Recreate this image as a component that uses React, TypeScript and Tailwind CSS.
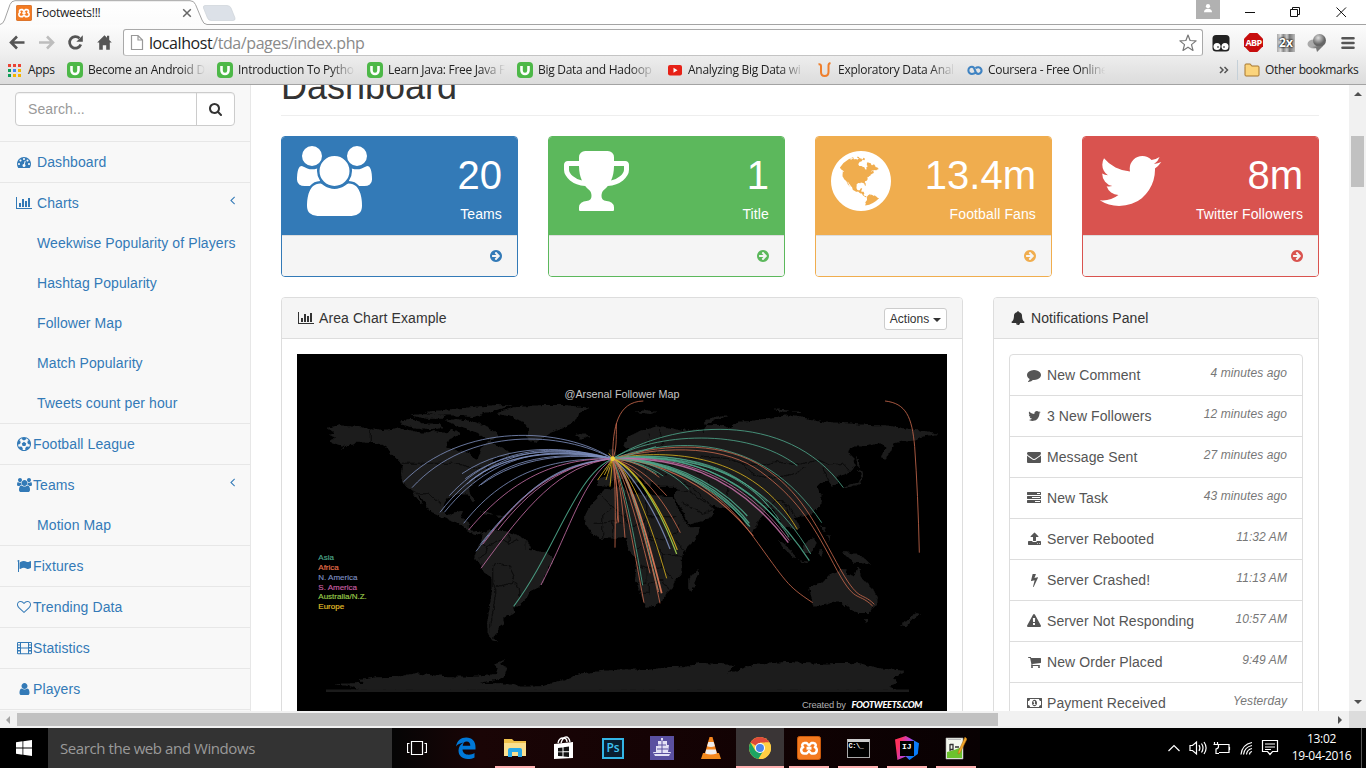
import React from 'react';

type Glyph = { x: number; w: number; d: string };

const G: Record<string, Glyph> = {
  users: { x: 0, w: 1920, d: 'M593 896q-162 5-265 128h-134q-82 0-138-40.5t-56-118.5q0-353 124-353 6 0 43.5 21t97.5 42.5 119 21.5q67 0 133-23-5 37-5 66 0 139 81 256zm1071 637q0 120-73 189.5t-194 69.5h-874q-121 0-194-69.5t-73-189.5q0-53 3.5-103.5t14-109 26.5-108.5 43-97.5 62-81 85.5-53.5 111.5-20q10 0 43 21.5t73 48 107 48 135 21.5 135-21.5 107-48 73-48 43-21.5q61 0 111.5 20t85.5 53.5 62 81 43 97.5 26.5 108.5 14 109 3.5 103.5zm-1024-1277q0 106-75 181t-181 75-181-75-75-181 75-181 181-75 181 75 75 181zm704 384q0 159-112.5 271.5t-271.5 112.5-271.5-112.5-112.5-271.5 112.5-271.5 271.5-112.5 271.5 112.5 112.5 271.5zm576 225q0 78-56 118.5t-138 40.5h-134q-103-123-265-128 81-117 81-256 0-29-5-66 66 23 133 23 59 0 119-21.5t97.5-42.5 43.5-21q124 0 124 353zm-128-609q0 106-75 181t-181 75-181-75-75-181 75-181 181-75 181 75 75 181z' },
  trophy: { x: 64, w: 1664, d: 'M522 883q-74-162-74-371h-256v96q0 78 94.5 162t235.5 113zm1078-275v-96h-256q0 209-74 371 141-29 235.5-113t94.5-162zm128-128v128q0 71-41.5 143t-112 130-173 97.5-215.5 44.5q-42 54-95 95-38 34-52.5 72.5t-14.5 89.5q0 54 30.5 91t97.5 37q75 0 133.5 45.5t58.5 114.5v64q0 14-9 23t-23 9h-832q-14 0-23-9t-9-23v-64q0-69 58.5-114.5t133.5-45.5q67 0 97.5-37t30.5-91q0-51-14.5-89.5t-52.5-72.5q-53-41-95-95-113-5-215.5-44.5t-173-97.5-112-130-41.5-143v-128q0-40 28-68t68-28h288v-96q0-66 47-113t113-47h576q66 0 113 47t47 113v96h288q40 0 68 28t28 68z' },
  globe: { x: 128, w: 1536, d: 'M896 128q209 0 385.5 103t279.5 279.5 103 385.5-103 385.5-279.5 279.5-385.5 103-385.5-103-279.5-279.5-103-385.5 103-385.5 279.5-279.5 385.5-103zm274 521q-2 1-9.5 9.5t-13.5 9.5q2 0 4.5-5t5-11 3.5-7q6-7 22-15 14-6 52-12 34-8 51 11-2-2 9.5-13t14.5-12q3-2 15-4.5t15-7.5l2-22q-12 1-17.5-7t-6.5-21q0 2-6 8 0-7-4.5-8t-11.5 1-9 1q-10-3-15-7.5t-8-16.5-4-15q-2-5-9.5-11t-9.5-10q-1-2-2.5-5.5t-3-6.5-4-5.5-5.5-2.5-7 5-7.5 10-4.5 5q-3-2-6-1.5t-4.5 1-4.5 3-5 3.5q-3 2-8.5 3t-8.5 2q15-5-1-11-10-4-16-3 9-4 7.5-12t-8.5-14h5q-1-4-8.5-8.5t-17.5-8.5-13-6q-8-5-34-9.5t-33-.5q-5 6-4.5 10.5t4 14 3.5 12.5q1 6-5.5 13t-6.5 12q0 7 14 15.5t10 21.5q-3 8-16 16t-16 12q-5 8-1.5 18.5t10.5 16.5q2 2 1.5 4t-3.5 4.5-5.5 4-6.5 3.5l-3 2q-11 5-20.5-6t-13.5-26q-7-25-16-30-23-8-29 1-5-13-41-26-25-9-58-4 6-1 0-15-7-15-19-12 3-6 4-17.5t1-13.5q3-13 12-23 1-1 7-8.5t9.5-13.5.5-6q35 4 50-11 5-5 11.5-17t10.5-17q9-6 14-5.5t14.5 5.5 14.5 5q14 1 15.5-11t-7.5-20q12 1 3-17-4-7-8-9-12-4-27 5-8 4 2 8-1-1-9.5 10.5t-16.5 17.5-16-5q-1-1-5.5-13.5t-9.5-13.5q-8 0-16 15 3-8-11-15t-24-8q19-12-8-27-7-4-20.5-5t-19.5 4q-5 7-5.5 11.5t5 8 10.5 5.5 11.5 4 8.5 3q14 10 8 14-2 1-8.5 3.5t-11.5 4.5-6 4q-3 4 0 14t-2 14q-5-5-9-17.5t-7-16.5q7 9-25 6l-10-1q-4 0-16 2t-20.5 1-13.5-8q-4-8 0-20 1-4 4-2-4-3-11-9.5t-10-8.5q-46 15-94 41 6 1 12-1 5-2 13-6.5t10-5.5q34-14 42-7l5-5q14 16 20 25-7-4-30-1-20 6-22 12 7 12 5 18-4-3-11.5-10t-14.5-11-15-5q-16 0-22 1-146 80-235 222 7 7 12 8 4 1 5 9t2.5 11 11.5-3q9 8 3 19 1-1 44 27 19 17 21 21 3 11-10 18-1-2-9-9t-9-4q-3 5 .5 18.5t10.5 12.5q-7 0-9.5 16t-2.5 35.5-1 23.5l2 1q-3 12 5.5 34.5t21.5 19.5q-13 3 20 43 6 8 8 9 3 2 12 7.5t15 10 10 10.5q4 5 10 22.5t14 23.5q-2 6 9.5 20t10.5 23q-1 0-2.5 1t-2.5 1q3 7 15.5 14t15.5 13q1 3 2 10t3 11 8 2q2-20-24-62-15-25-17-29-3-5-5.5-15.5t-4.5-14.5q2 0 6 1.5t8.5 3.5 7.5 4 2 3q-3 7 2 17.5t12 18.5 17 19 12 13q6 6 14 19.5t0 13.5q9 0 20 10.5t17 19.5q5 8 8 26t5 24q2 7 8.5 13.5t12.5 9.5l16 8 13 7q5 2 18.5 10.5t21.5 11.5q10 4 16 4t14.5-2.5 13.5-3.5q15-2 29 15t21 21q36 19 55 11-2 1 .5 7.5t8 15.5 9 14.5 5.5 8.5q5 6 18 15t18 15q6-4 7-9-3 8 7 20t18 10q14-3 14-32-31 15-49-18 0-1-2.5-5.5t-4-8.5-2.5-8.5 0-7.5 5-3q9 0 10-3.5t-2-12.5-4-13q-1-8-11-20t-12-15q-5 9-16 8t-16-9q0 1-1.5 5.5t-1.5 6.5q-13 0-15-1 1-3 2.5-17.5t3.5-22.5q1-4 5.5-12t7.5-14.5 4-12.5-4.5-9.5-17.5-2.5q-19 1-26 20-1 3-3 10.5t-5 11.5-9 7q-7 3-24 2t-24-5q-13-8-22.5-29t-9.5-37q0-10 2.5-26.5t3-25-5.5-24.5q3-2 9-9.5t10-10.5q2-1 4.5-1.5t4.5 0 4-1.5 3-6q-1-1-4-3-3-3-4-3 7 3 28.5-1.5t27.5 1.5q15 11 22-2 0-1-2.5-9.5t-.5-13.5q5 27 29 9 3 3 15.5 5t17.5 5q3 2 7 5.5t5.5 4.5 5-.5 8.5-6.5q10 14 12 24 11 40 19 44 7 3 11 2t4.5-9.5 0-14-1.5-12.5l-1-8v-18l-1-8q-15-3-18.5-12t1.5-18.5 15-18.5q1-1 8-3.5t15.5-6.5 12.5-8q21-19 15-35 7 0 11-9-1 0-5-3t-7.5-5-4.5-2q9-5 2-16 5-3 7.5-11t7.5-10q9 12 21 2 8-8 1-16 5-7 20.5-10.5t18.5-9.5q7 2 8-2t1-12 3-12q4-5 15-9t13-5l17-11q3-4 0-4 18 2 31-11 10-11-6-20 3-6-3-9.5t-15-5.5q3-1 11.5-.5t10.5-1.5q15-10-7-16-17-5-43 12zm-163 877q206-36 351-189-3-3-12.5-4.5t-12.5-3.5q-18-7-24-8 1-7-2.5-13t-8-9-12.5-8-11-7q-2-2-7-6t-7-5.5-7.5-4.5-8.5-2-10 1l-3 1q-3 1-5.5 2.5t-5.5 3-4 3 0 2.5q-21-17-36-22-5-1-11-5.5t-10.5-7-10-1.5-11.5 7q-5 5-6 15t-2 13q-7-5 0-17.5t2-18.5q-3-6-10.5-4.5t-12 4.5-11.5 8.5-9 6.5-8.5 5.5-8.5 7.5q-3 4-6 12t-5 11q-2-4-11.5-6.5t-9.5-5.5q2 10 4 35t5 38q7 31-12 48-27 25-29 40-4 22 12 26 0 7-8 20.5t-7 21.5q0 6 2 16z' },
  twitter: { x: 64, w: 1664, d: 'M1684 408q-67 98-162 167 1 14 1 42 0 130-38 259.5t-115.5 248.5-184.5 210.5-258 146-323 54.5q-271 0-496-145 35 4 78 4 225 0 401-138-105-2-188-64.5t-114-159.5q33 5 61 5 43 0 85-11-112-23-185.5-111.5t-73.5-205.5v-4q68 38 146 41-66-44-105-115t-39-154q0-88 44-163 121 149 294.5 238.5t371.5 99.5q-8-38-8-74 0-134 94.5-228.5t228.5-94.5q140 0 236 102 109-21 205-78-37 115-142 178 93-10 186-50z' },
  arrow: { x: 128, w: 1536, d: 'M1413 896q0-27-18-45l-91-91-362-362q-18-18-45-18t-45 18l-91 91q-18 18-18 45t18 45l189 189h-502q-26 0-45 19t-19 45v128q0 26 19 45t45 19h502l-189 189q-18 18-18 45t18 45l91 91q18 18 45 18t45-18l362-362 91-91q18-18 18-45zm251 0q0 209-103 385.5t-279.5 279.5-385.5 103-385.5-103-279.5-279.5-103-385.5 103-385.5 279.5-279.5 385.5-103 385.5 103 279.5 279.5 103 385.5z' },
  search: { x: 64, w: 1664, d: 'M1216 832q0-185-131.5-316.5t-316.5-131.5-316.5 131.5-131.5 316.5 131.5 316.5 316.5 131.5 316.5-131.5 131.5-316.5zm512 832q0 52-38 90t-90 38q-54 0-90-38l-343-342q-179 124-399 124-143 0-273.5-55.5t-225-150-150-225-55.5-273.5 55.5-273.5 150-225 225-150 273.5-55.5 273.5 55.5 225 150 150 225 55.5 273.5q0 220-124 399l343 343q37 37 37 90z' },
  chart: { x: 0, w: 2048, d: 'M640 896v512h-256v-512h256zm384-512v1024h-256v-1024h256zm1024 1152v128h-2048v-1536h128v1408h1920zm-640-896v768h-256v-768h256zm384-384v1152h-256v-1152h256z' },
  tacho: { x: 0, w: 1792, d: 'M384 1152q0-53-37.5-90.5t-90.5-37.5-90.5 37.5-37.5 90.5 37.5 90.5 90.5 37.5 90.5-37.5 37.5-90.5zm192-448q0-53-37.5-90.5t-90.5-37.5-90.5 37.5-37.5 90.5 37.5 90.5 90.5 37.5 90.5-37.5 37.5-90.5zm428 481l101-382q6-26-7.5-48.5t-38.5-29.5-48 6.5-30 39.5l-101 382q-60 5-107 43.5t-63 98.5q-20 77 20 146t117 89 146-20 89-117q16-60-6-117t-72-91zm660-33q0-53-37.5-90.5t-90.5-37.5-90.5 37.5-37.5 90.5 37.5 90.5 90.5 37.5 90.5-37.5 37.5-90.5zm-640-640q0-53-37.5-90.5t-90.5-37.5-90.5 37.5-37.5 90.5 37.5 90.5 90.5 37.5 90.5-37.5 37.5-90.5zm448 192q0-53-37.5-90.5t-90.5-37.5-90.5 37.5-37.5 90.5 37.5 90.5 90.5 37.5 90.5-37.5 37.5-90.5zm320 448q0 261-141 483-19 29-54 29h-1402q-35 0-54-29-141-221-141-483 0-182 71-348t191-286 286-191 348-71 348 71 286 191 191 286 71 348z' },
  futbol: { x: 0, w: 1792, d: 'M609 816l287-208 287 208-109 336h-355zm287-816q182 0 348 71t286 191 191 286 71 348-71 348-191 286-286 191-348 71-348-71-286-191-191-286-71-348 71-348 191-286 286-191 348-71zm619 1350q149-203 149-454v-3l-102 89-240-224 63-323 134 12q-150-206-389-282l53 124-287 159-287-159 53-124q-239 76-389 282l135-12 62 323-240 224-102-89v3q0 251 149 454l30-132 326 40 139 298-116 69q117 39 240 39t240-39l-116-69 139-298 326-40z' },
  flag: { x: 0, w: 1792, d: 'M320 256q0 72-64 110v1266q0 13-9.5 22.5t-22.5 9.5h-64q-13 0-22.5-9.5t-9.5-22.5v-1266q-64-38-64-110 0-53 37.5-90.5t90.5-37.5 90.5 37.5 37.5 90.5zm1472 64v763q0 25-12.5 38.5t-39.5 27.5q-215 116-369 116-61 0-123.5-22t-108.5-48-115.5-48-142.5-22q-192 0-464 146-17 9-33 9-26 0-45-19t-19-45v-742q0-32 31-55 21-14 79-43 236-120 421-120 107 0 200 29t219 88q38 19 88 19 54 0 117.5-21t110-47 88-47 54.5-21q26 0 45 19t19 45z' },
  heart: { x: 0, w: 1792, d: 'M1664 596q0-81-21.5-143t-55-98.5-81.5-59.5-94-31-98-8-112 25.5-110.5 64-86.5 72-60 61.5q-18 22-49 22t-49-22q-24-28-60-61.5t-86.5-72-110.5-64-112-25.5-98 8-94 31-81.5 59.5-55 98.5-21.5 143q0 168 187 355l581 560 580-559q188-188 188-356zm128 0q0 221-229 450l-623 600q-18 18-44 18t-44-18l-624-602q-10-8-27.5-26t-55.5-65.5-68-97.5-53.5-121-23.5-138q0-220 127-344t351-124q62 0 126.5 21.5t120 58 95.5 68.5 76 68q36-36 76-68t95.5-68.5 120-58 126.5-21.5q224 0 351 124t127 344z' },
  film: { x: 0, w: 1920, d: 'M160 128h1600q160 0 160 160v1248q0 160-160 160h-1600q-160 0-160-160v-1248q0-160 160-160zM128 256v192h256v-192zM128 576v192h256v-192zM128 960v192h256v-192zM128 1344v224h256v-224zM512 256v576h896v-576zM512 960v608h896v-608zM1536 256v192h256v-192zM1536 576v192h256v-192zM1536 960v192h256v-192zM1536 1344v224h256v-224z' },
  user: { x: 192, w: 1408, d: 'M1536 1399q0 109-62.5 187t-150.5 78h-854q-88 0-150.5-78t-62.5-187q0-85 8.5-160.5t31.5-152 58.5-131 94-89 134.5-34.5q131 128 313 128t313-128q76 0 134.5 34.5t94 89 58.5 131 31.5 152 8.5 160.5zm-256-887q0 159-112.5 271.5t-271.5 112.5-271.5-112.5-112.5-271.5 112.5-271.5 271.5-112.5 271.5 112.5 112.5 271.5z' },
  angle: { x: 576, w: 640, d: 'M1203 544q0 13-10 23l-393 393 393 393q10 10 10 23t-10 23l-50 50q-10 10-23 10t-23-10l-466-466q-10-10-10-23t10-23l466-466q10-10 23-10t23 10l50 50q10 10 10 23z' },
  bell: { x: 0, w: 1792, d: 'M912 1696q0-16-16-16-59 0-101.5-42.5t-42.5-101.5q0-16-16-16t-16 16q0 73 51.5 124.5t124.5 51.5q16 0 16-16zm816-288q0 52-38 90t-90 38h-448q0 106-75 181t-181 75-181-75-75-181h-448q-52 0-90-38t-38-90q50-42 91-88t85-119.5 74.5-158.5 50-206 19.5-260q0-152 117-282.5t307-158.5q-8-19-8-39 0-40 28-68t68-28 68 28 28 68q0 20-8 39 190 28 307 158.5t117 282.5q0 139 19.5 260t50 206 74.5 158.5 85 119.5 91 88z' },
  comment: { x: 0, w: 1792, d: 'M1792 896q0 174-120 321.5t-326 233-450 85.5q-70 0-145-8-198 175-460 242-49 14-114 22-17 2-30.5-9t-17.5-29v-1q-3-4-.5-12t2-10 4.5-9.5l6-9 7-8.5 8-9q7-8 31-34.5t34.5-38 31-39.5 32.5-51 27-59 26-76q-157-89-247.5-220t-90.5-281q0-130 71-248.5t191-204.5 286-136.5 348-50.5q244 0 450 85.5t326 233 120 321.5z' },
  envelope: { x: 0, w: 1792, d: 'M1792 710v794q0 66-47 113t-113 47h-1472q-66 0-113-47t-47-113v-794q44 49 101 87 362 246 497 345 57 42 92.5 65.5t94.5 48 110 24.5h2q51 0 110-24.5t94.5-48 92.5-65.5q170-123 498-345 57-39 100-87zm0-294q0 79-49 151t-122 123q-376 261-468 325-10 7-42.5 31t-54 38.5-52 32.5-57.5 27-50 9h-2q-23 0-50-9t-57.5-27-52-32.5-54-38.5-42.5-31q-91-64-262-182.5t-205-142.5q-62-42-117-115.5t-55-136.5q0-78 41.5-130t118.5-52h1472q65 0 112.5 47t47.5 113z' },
  tasks: { x: 0, w: 1792, d: 'M1024 1408h640v-128h-640v128zm-384-512h1024v-128h-1024v128zm640-512h384v-128h-384v128zm512 832v256q0 26-19 45t-45 19h-1664q-26 0-45-19t-19-45v-256q0-26 19-45t45-19h1664q26 0 45 19t19 45zm0-512v256q0 26-19 45t-45 19h-1664q-26 0-45-19t-19-45v-256q0-26 19-45t45-19h1664q26 0 45 19t19 45zm0-512v256q0 26-19 45t-45 19h-1664q-26 0-45-19t-19-45v-256q0-26 19-45t45-19h1664q26 0 45 19t19 45z' },
  upload: { x: 64, w: 1664, d: 'M1344 1472q0-26-19-45t-45-19-45 19-19 45 19 45 45 19 45-19 19-45zm256 0q0-26-19-45t-45-19-45 19-19 45 19 45 45 19 45-19 19-45zm128-224v320q0 40-28 68t-68 28h-1472q-40 0-68-28t-28-68v-320q0-40 28-68t68-28h427q21 56 70.5 92t110.5 36h256q61 0 110.5-36t70.5-92h427q40 0 68 28t28 68zm-325-648q-17 40-59 40h-256v448q0 26-19 45t-45 19h-256q-26 0-45-19t-19-45v-448h-256q-42 0-59-40-17-39 14-69l448-448q18-19 45-19t45 19l448 448q31 30 14 69z' },
  bolt: { x: 448, w: 896, d: 'M1333 566q18 20 7 44l-540 1157q-13 25-42 25-4 0-14-2-17-5-25.5-19t-4.5-30l197-808-406 101q-4 1-12 1-18 0-31-11-18-15-13-39l201-825q4-14 16-23t28-9h328q19 0 32 12.5t13 29.5q0 8-5 18l-171 463 396-98q8-2 12-2 19 0 34 15z' },
  warning: { x: 0, w: 1792, d: 'M1024 1375v-190q0-14-9.5-23.5t-22.5-9.5h-192q-13 0-22.5 9.5t-9.5 23.5v190q0 14 9.5 23.5t22.5 9.5h192q13 0 22.5-9.5t9.5-23.5zm-2-374l18-459q0-12-10-19-13-11-24-11h-220q-11 0-24 11-10 7-10 21l17 457q0 10 10 16.5t24 6.5h185q14 0 23.5-6.5t10.5-16.5zm-14-934l768 1408q35 63-2 126-17 29-46.5 46t-63.5 17h-1536q-34 0-63.5-17t-46.5-46q-37-63-2-126l768-1408q17-31 47-49t65-18 65 18 47 49z' },
  cart: { x: 64, w: 1664, d: 'M704 1536q0 52-38 90t-90 38-90-38-38-90 38-90 90-38 90 38 38 90zm896 0q0 52-38 90t-90 38-90-38-38-90 38-90 90-38 90 38 38 90zm128-1088v512q0 24-16.5 42.5t-40.5 21.5l-1044 122q13 60 13 70 0 16-24 64h920q26 0 45 19t19 45-19 45-45 19h-1024q-26 0-45-19t-19-45q0-11 8-31.5t16-36 21.5-40 15.5-29.5l-177-823h-204q-26 0-45-19t-19-45 19-45 45-19h256q16 0 28.5 6.5t19.5 15.5 13 24.5 8 26 5.5 29.5 4.5 26h1201q26 0 45 19t19 45z' },
  money: { x: 0, w: 1920, d: 'M64 256h1792q64 0 64 64v1152q0 64-64 64h-1792q-64 0-64-64v-1152q0-64 64-64zM384 384q0 106-75 181t-181 75v512q106 0 181 75t75 181h1152q0-106 75-181t181-75v-512q-106 0-181-75t-75-181zM960 480q130 0 225 130t95 286-95 286-225 130-225-130-95-286 95-286 225-130zM890 640l-130 120 70 85 70-55v250h-110v110h340v-110h-110v-400z' },
};

function Fa({ name, size = 14, className = '' }: { name: string; size?: number; className?: string }) {
  const g = G[name];
  return (
    <svg viewBox={`${g.x} 0 ${g.w} 1792`} width={(g.w / 1792) * size} height={size} fill="currentColor" fillRule={name === 'film' || name === 'money' ? 'evenodd' : 'nonzero'} className={`block shrink-0 ${className}`}>
      <path d={g.d} />
    </svg>
  );
}

function Fw({ name }: { name: string }) {
  return (
    <span className="flex w-[18px] shrink-0 justify-center">
      <Fa name={name} />
    </span>
  );
}

function Xampp({ size }: { size: number }) {
  return (
    <svg width={size} height={size} viewBox="0 0 24 24" className="block shrink-0">
      <rect x="0.5" y="0.5" width="23" height="23" rx="2" fill="#f47a20" stroke="#c9590c" />
      <path d="M7.500 7h2.200l2.300 2.500 2.300-2.500h2.200a2.300 2.300 0 0 1 1.300 4.200 3.300 3.300 0 0 1-1 6.300h-2.500l-2.300-2.500-2.300 2.500H7.200a3.300 3.300 0 0 1-1-6.300A2.300 2.300 0 0 1 7.500 7z" fill="none" stroke="#fff" strokeWidth="2.500" strokeLinejoin="round" />
      <path d="M9.500 12.200h5" stroke="#fff" strokeWidth="3" />
    </svg>
  );
}

/* ---------- Browser chrome ---------- */

function TabStrip() {
  return (
    <div className="flex h-[25px] shrink-0 bg-white">
      <div className="relative h-[25px] w-[240px] shrink-0">
        <svg width="240" height="25" viewBox="0 0 240 25" className="absolute inset-0">
          <defs>
            <linearGradient id="tab" x1="0" y1="0" x2="0" y2="1">
              <stop offset="0" stopColor="#fff" />
              <stop offset="1" stopColor="#fbfbfb" />
            </linearGradient>
          </defs>
          <path d="M0 24.500Q3 24 4.500 20L10 4.500Q11.500 0.800 15 0.700H190Q194 0.700 195.500 4.500L202 20Q203.500 24.300 207 24.500V25H0z" fill="url(#tab)" />
          <path d="M0 24.500Q3 24 4.500 20L10 4.500Q11.500 0.800 15 0.700H190Q194 0.700 195.500 4.500L202 20Q203.500 24.300 207 24.500H240" fill="none" stroke="#a3a3a3" />
          <path d="M205 5.500H227Q230 5.500 231 8L235 18Q235.500 20.500 233 20.500H211Q208.500 20.500 207.500 18L203.500 8Q203 5.500 205 5.500z" fill="#dce1e8" stroke="#cdd2d9" strokeWidth=".7" />
        </svg>
        <div className="relative flex h-[25px] items-center pl-4">
          <Xampp size={16} />
          <span className="ml-1 w-[146px] text-[12px] tracking-[-0.22px] text-[#222]">Footweets!!!</span>
          <svg width="10" height="10" viewBox="0 0 10 10" stroke="#666" strokeWidth="1.500"><path d="M1.200 1.200l7.600 7.600M8.800 1.200L1.200 8.800" /></svg>
        </div>
      </div>
      <div className="flex grow border-b border-[#a3a3a3]">
        <div className="ml-auto mr-[24px] flex h-[19px] w-6 justify-center bg-[#b1b1b1] pt-1">
          <svg width="10" height="9" viewBox="0 0 10 9" fill="#fff"><circle cx="5" cy="2.200" r="2.100" /><path d="M1 8.200Q1 4.700 5 4.700t4 3.500z" /></svg>
        </div>
        <svg width="122" height="24" viewBox="1244 0 122 24" fill="none" stroke="#111" strokeWidth="1">
          <path d="M1245 12.500h10M1290.500 9.500h7v7h-7zM1292.500 9.500v-2h7v7h-2M1336.500 7.500l9.500 9.500M1346 7.500l-9.500 9.500" />
        </svg>
      </div>
    </div>
  );
}

function Toolbar() {
  return (
    <div className="flex h-[35px] shrink-0 pt-1">
      <svg width="123" height="31" viewBox="0 29 123 31" fill="none" className="shrink-0">
        <path d="M24.500 42.500H12M17 36.500l-6 6 6 6" stroke="#555" strokeWidth="2.600" />
        <path d="M39 42.500h12.500M47 36.500l6 6-6 6" stroke="#bdbdbd" strokeWidth="2.600" />
        <path d="M79.500 38.300A5.800 5.800 0 1 0 80.800 44.500" stroke="#555" strokeWidth="2.700" />
        <path d="M82.800 35.200v6.500h-6.500z" fill="#555" />
        <path d="M104.500 35.200l-7.300 7.300h2v7.300h3.600v-4.600h3.400v4.600h3.600v-7.300h2l-2.600-2.600v-4.200h-2.200v2z" fill="#555" />
      </svg>
      <div className="flex h-[27px] w-[1080px] shrink-0 items-center rounded-[3px] border border-[#a9a9a9] border-b-[#c4c4c4] bg-white pl-[6px] pr-[5px]">
        <svg width="14" height="17" viewBox="0 0 14 17" fill="#fff" stroke="#999" strokeWidth="1.200"><path d="M1.500 1.500h6.500l4.500 4.500v9.500h-11zM8 1.500v4.500h4.500" /></svg>
        <span className="ml-[5px] text-[16px] leading-[24px] tracking-[-0.42px] text-[#8a8a8a]"><span className="text-[#222]">localhost</span>/tda/pages/index.php</span>
        <svg className="ml-auto" width="18" height="18" viewBox="0 0 18 18" fill="#fff" stroke="#777" strokeWidth="1.200" strokeLinejoin="round"><path d="M9 1l2.100 5.500 6 .4-4.600 3.700 1.500 5.800L9 13.200l-5 3.200 1.500-5.800L.9 6.900l6-.4z" /></svg>
      </div>
      <div className="ml-[9px] flex h-[27px] items-center gap-[14px]">
        <svg width="18" height="18" viewBox="0 0 18 18"><rect x=".5" y="1" width="17" height="16.500" rx="3.500" fill="#222" /><circle cx="5" cy="12.500" r="3.500" fill="#fff" /><circle cx="13" cy="12.500" r="3.500" fill="#fff" /><circle cx="6" cy="13" r=".8" /><circle cx="12" cy="13" r=".8" /></svg>
        <span className="flex h-[19px] w-[19px] items-center justify-center bg-[#c70d0d] text-[9px] font-bold tracking-[-0.7px] text-white [clip-path:polygon(30%_0,70%_0,100%_30%,100%_70%,70%_100%,30%_100%,0_70%,0_30%)]">ABP</span>
        <span className="flex h-[18px] w-[18px] items-center justify-center bg-[linear-gradient(90deg,#aaa,#ddd_20%,#888_35%,#ccc_55%,#777_70%,#bbb)] text-[12px] font-bold text-white [text-shadow:0_0_2px_#000,0_0_2px_#000]">2x</span>
        <svg width="20" height="20" viewBox="0 0 20 20" className="-ml-[2px]"><defs><radialGradient id="orb" cx=".4" cy=".3"><stop offset="0" stopColor="#ddd" /><stop offset="1" stopColor="#666" /></radialGradient></defs><ellipse cx="7" cy="11" rx="6.500" ry="4.500" fill="#aaa" /><circle cx="12.500" cy="7.500" r="6.500" fill="url(#orb)" /><path d="M5 14q5-1 11-1l-6 6-1-4z" fill="#777" /></svg>
        <svg width="14" height="14" viewBox="0 0 14 14" stroke="#555" strokeWidth="2.600" strokeLinecap="round"><path d="M1.500 2.200h11M1.500 7h11M1.500 11.800h11" /></svg>
      </div>
    </div>
  );
}

function Udemy() {
  return (
    <span className="flex h-4 w-4 shrink-0 items-center justify-center rounded-[4px] bg-[#4db848]">
      <svg width="10" height="11" viewBox="0 0 10 11" fill="none" stroke="#fff" strokeWidth="2.600"><path d="M1.500 1v4.500a3.500 3.500 0 0 0 7 0V1" /></svg>
    </span>
  );
}

const ytIcon = <svg width="16" height="16" viewBox="0 0 16 16" className="shrink-0"><rect x="1" y="3" width="14" height="10.500" rx="2" fill="#e62117" /><path d="M6.500 5.800v5l4-2.500z" fill="#fff" /></svg>;
const orangeU = <svg width="16" height="16" viewBox="0 0 16 16" fill="none" className="shrink-0"><path d="M1.500 2.300Q4 2 4 4v6q0 4 3.700 4 3.800 0 3.800-4V3.500q0-2 2-2.500" stroke="#ef7f2d" strokeWidth="2" /></svg>;
const courseraIcon = <svg width="16" height="16" viewBox="0 0 16 16" fill="none" className="shrink-0"><path d="M9 10.300Q7 12 5 12a3.600 3.600 0 1 1 0-7.200Q7 4.800 8 8.400T11.200 12a3.400 3.400 0 1 0-2.600-5.700" stroke="#3f83c2" strokeWidth="2.100" /></svg>;

function BookmarksBar() {
  const items: [React.ReactNode, string][] = [
    [<Udemy />, 'Become an Android D'],
    [<Udemy />, 'Introduction To Pytho'],
    [<Udemy />, 'Learn Java: Free Java F'],
    [<Udemy />, 'Big Data and Hadoop'],
    [ytIcon, 'Analyzing Big Data wi'],
    [orangeU, 'Exploratory Data Anal'],
    [courseraIcon, 'Coursera - Free Online'],
  ];
  const dots = ['#ea4335', '#ea4335', '#ea4335', '#0f9d58', '#4285f4', '#f4b400', '#0f9d58', '#f4b400', '#f4b400'];
  return (
    <div className="flex h-[24px] shrink-0 items-center pb-[4px] pl-2 text-[12px] text-[#222]">
      <span className="grid w-[13px] grid-cols-3 gap-[2px]">
        {dots.map((c, i) => <span key={i} className="h-[3px] w-[3px]" style={{ background: c }} />)}
      </span>
      <span className="ml-[7px] w-[39px] tracking-[-0.3px]">Apps</span>
      {items.map(([icon, label], i) => (
        <span key={i} className="flex w-[150px] shrink-0 items-center gap-[5px]">
          {icon}
          <span className="w-[121px] whitespace-nowrap tracking-[-0.28px] [mask-image:linear-gradient(90deg,#000_76%,transparent_97%)]">{label}</span>
        </span>
      ))}
      <svg width="10" height="8" viewBox="0 0 10 8" className="ml-[102px] mr-[8px]" fill="none" stroke="#555" strokeWidth="1.500"><path d="M1 1l3 3-3 3M5.500 1l3 3-3 3" /></svg>
      <span className="mr-[6px] h-5 w-px bg-[#c5d0d8]" />
      <svg width="16" height="14" viewBox="0 0 16 14"><path d="M1 3.500V12q0 1 1 1h12q1 0 1-1V4q0-1-1-1H7.500L6.500 1H2Q1 1 1 2z" fill="#fbd47c" stroke="#a5742c" /></svg>
      <span className="ml-[5px] whitespace-nowrap tracking-[-0.35px]">Other bookmarks</span>
    </div>
  );
}

/* ---------- Sidebar ---------- */

type Nav = { icon: string; label: string; gap?: boolean; arrow?: boolean; children?: string[] };
const nav: Nav[] = [
  { icon: 'tacho', label: 'Dashboard', gap: true },
  { icon: 'chart', label: 'Charts', gap: true, arrow: true, children: ['Weekwise Popularity of Players', 'Hashtag Popularity', 'Follower Map', 'Match Popularity', 'Tweets count per hour'] },
  { icon: 'futbol', label: 'Football League' },
  { icon: 'users', label: 'Teams', arrow: true, children: ['Motion Map'] },
  { icon: 'flag', label: 'Fixtures' },
  { icon: 'heart', label: 'Trending Data' },
  { icon: 'film', label: 'Statistics' },
  { icon: 'user', label: 'Players' },
];

function Sidebar() {
  return (
    <aside className="w-[251px] shrink-0 border-r border-[#e7e7e7] bg-[#f8f8f8] tracking-[0.09px] text-[#337ab7]">
      <div className="border-b border-[#e7e7e7] px-[15px] pb-[15px] pt-[7px]">
        <div className="flex h-[34px] rounded-[4px] border border-[#ccc] bg-white shadow-[inset_0_1px_1px_rgba(0,0,0,0.06)]">
          <span className="grow border-r border-[#ccc] pl-3 leading-[32px] text-[#999]">Search...</span>
          <span className="flex w-[37px] items-center justify-center text-[#333]"><Fa name="search" /></span>
        </div>
      </div>
      <ul>
        {nav.map((n) => (
          <li key={n.label} className="border-b border-[#e7e7e7]">
            <div className="flex h-10 items-center px-[15px]">
              <Fw name={n.icon} />
              <span className={n.gap ? 'ml-1' : ''}>{n.label}</span>
              {n.arrow && <Fa name="angle" className="mb-[6px] ml-auto" />}
            </div>
            {n.children?.map((c) => (
              <div key={c} className="h-10 whitespace-nowrap pl-[37px] leading-10">{c}</div>
            ))}
          </li>
        ))}
      </ul>
    </aside>
  );
}

/* ---------- Stat cards ---------- */

const cards = [
  { icon: 'users', value: '20', label: 'Teams', box: 'border-[#337ab7]', head: 'bg-[#337ab7]', ink: 'text-[#337ab7]' },
  { icon: 'trophy', value: '1', label: 'Title', box: 'border-[#5cb85c]', head: 'bg-[#5cb85c]', ink: 'text-[#5cb85c]' },
  { icon: 'globe', value: '13.4m', label: 'Football Fans', box: 'border-[#f0ad4e]', head: 'bg-[#f0ad4e]', ink: 'text-[#f0ad4e]' },
  { icon: 'twitter', value: '8m', label: 'Twitter Followers', box: 'border-[#d9534f]', head: 'bg-[#d9534f]', ink: 'text-[#d9534f]' },
];

function Cards() {
  return (
    <div className="grid grid-cols-4 gap-[30px]">
      {cards.map((c) => (
        <div key={c.label} className={`h-[141px] overflow-hidden rounded-[4px] border ${c.box}`}>
          <div className={`flex h-[98px] items-start justify-between px-[15px] pt-[9px] text-white ${c.head}`}>
            <Fa name={c.icon} size={70} />
            <div className="pt-px text-right">
              <div className="text-[40px] leading-[57px]">{c.value}</div>
              <div className="leading-5 tracking-[0.12px]">{c.label}</div>
            </div>
          </div>
          <div className={`flex h-[41px] items-center justify-end border-t border-[#ddd] bg-[#f5f5f5] px-[15px] ${c.ink}`}>
            <Fa name="arrow" />
          </div>
        </div>
      ))}
    </div>
  );
}

/* ---------- Follower map ---------- */

const land = [
  'M92 233L130 226 185 231 223 234 260 240 300 235 340 240 380 248 420 243 450 250 470 236 492 250 475 262 458 272 450 292 480 300 520 305 530 322 542 330 550 306 555 290 582 272 600 288 622 293 642 312 622 322 598 322 588 335 610 345 572 352 560 375 542 385 534 400 520 412 527 435 537 452 530 457 515 434 490 432 470 437 455 445 445 460 440 485 455 495 470 490 490 482 502 484 490 502 507 508 520 515 518 535 530 545 545 542 560 550 540 556 520 548 505 530 480 517 455 507 430 500 402 482 385 455 365 432 380 462 372 458 350 425 330 410 318 395 315 370 318 345 305 330 285 310 275 295 260 285 240 280 210 278 185 275 165 285 130 302 150 288 130 285 100 275 120 262 95 255 115 248z',
  'M312 210L352 206 380 220 430 222 446 235 400 238 350 232 318 224z',
  'M340 196L380 192 450 198 440 206 390 206z',
  'M450 212L480 206 540 216 590 240 605 258 590 275 562 262 545 248 500 235 470 222z',
  'M385 186L440 180 520 172 600 165 650 166 610 178 570 188 530 202 470 196 420 198z',
  'M600 190L655 172 740 165 800 164 882 173 850 190 840 212 800 235 765 248 742 265 722 278 702 274 690 255 697 235 682 215 650 202z',
  'M840 255L870 250 880 258 855 266z',
  'M545 482L570 484 592 494 570 492zM602 496L625 498 610 504z',
  'M560 550L582 538 602 541 640 545 668 555 692 575 705 588 702 600 742 606 772 620 768 640 752 660 745 692 735 710 702 722 690 745 672 768 652 770 655 785 622 805 625 820 607 830 602 850 592 862 608 876 585 866 575 850 573 820 580 780 585 740 590 710 585 682 565 668 550 640 535 620 540 605 555 580z',
  'M905 440L922 418 972 410 982 408 988 425 1017 432 1052 435 1122 438 1137 450 1152 485 1172 520 1182 535 1212 533 1207 550 1187 580 1162 605 1157 630 1160 670 1137 690 1132 710 1112 730 1097 755 1077 768 1052 770 1042 755 1032 725 1017 690 1022 650 1017 620 997 600 992 575 997 565 972 562 952 565 912 568 887 548 867 520 864 505 872 485 887 460z',
  'M1177 718L1177 685 1192 672 1207 658 1210 672 1197 705 1187 724z',
  'M937 330L942 300 952 294 962 325 957 337zM922 325l8-10 2 14z',
  'M982 288L992 262 1017 250 1052 235 1082 226 1122 234 1162 243 1202 238 1222 246 1232 226 1272 224 1302 235 1322 215 1372 212 1422 203 1472 196 1532 205 1592 215 1652 220 1712 225 1772 226 1822 235 1862 240 1902 245 1930 252 1892 258 1872 262 1852 272 1822 275 1792 280 1787 300 1768 327 1755 320 1762 300 1772 290 1752 280 1712 288 1672 290 1652 305 1672 325 1677 345 1662 365 1642 375 1622 380 1627 400 1607 410 1597 395 1572 400 1562 410 1577 435 1572 470 1547 495 1512 500 1497 505 1514 532 1497 540 1477 525 1467 535 1487 570 1472 560 1457 530 1450 505 1432 480 1422 470 1402 490 1392 510 1372 540 1367 555 1352 525 1337 490 1322 480 1302 475 1262 472 1242 465 1257 480 1247 500 1222 512 1177 525 1162 490 1147 460 1132 440 1142 420 1132 410 1092 410 1077 405 1067 395 1062 410 1047 405 1042 385 1012 375 1027 395 1017 402 997 380 972 385 952 390 932 410 907 408 902 385 937 380 937 365 922 355 947 345 972 335 992 325 997 312 1002 300z',
  'M1222 222L1242 205 1282 196 1300 198 1262 208 1232 224zM1015 185l35-4 35 4-20 8zM1430 178l50 3-15 8zM1490 184l30 2-15 5z',
  'M1637 415L1662 403 1685 398 1697 372 1684 366 1690 360 1700 364 1702 378 1690 402 1665 410zM1680 318l8 10 4 25-8-8z',
  'M1446 568L1477 590 1502 625 1490 622 1465 600zM1517 590L1552 560 1562 575 1547 610 1522 610zM1500 630l42 5-10 5zM1567 600l15-5-5 22-8-4zM1572 525l12 4 5 18-10-4zM1590 555l12 2 0 16z',
  'M1637 605L1662 608 1687 612 1712 630 1725 645 1697 640 1672 638 1652 620z',
  'M1540 715L1552 705 1582 695 1602 672 1627 665 1632 656 1655 658 1652 672 1674 682 1684 650 1692 662 1695 684 1714 700 1732 718 1743 740 1740 765 1720 790 1685 790 1665 776 1652 765 1645 772 1635 758 1612 755 1587 765 1552 770z',
  'M1700 808l18-2-8 12zM1857 785L1872 793 1852 803 1842 815 1828 832 1812 828 1842 808z',
  'M110 1022L190 1018 160 1008 108 1003 200 998 190 990 240 982 300 980 360 970 400 975 450 978 500 980 560 975 602 972 608 955 594 940 632 928 612 942 635 955 625 980 602 990 550 998 620 1000 680 1010 740 1008 800 990 860 970 920 962 990 958 1052 960 1122 950 1162 952 1212 938 1272 942 1317 945 1295 970 1372 945 1472 935 1572 942 1622 938 1692 940 1752 955 1827 962 1792 985 1802 1000 1777 1010 1812 1022z',
];

const borders =
  'M223 234V280M318 340H470L500 345 530 355 555 352M350 426L372 432 400 430 415 445 435 462M553 580L575 590 570 610 550 625M575 590L600 575 620 570 640 580 668 570M595 650L600 640 640 650 655 680 650 700 625 705 600 710M590 650V700L600 720 590 790 580 850M655 695L670 720 672 740M640 580V550M690 575V598' +
  'M918 440L950 470 920 500 920 520M950 470L985 500 1000 480 990 430M1052 435V500H1142M985 500L1000 530 1040 520 1052 500M1052 520L1060 560 1100 570 1140 550 1150 520M890 520L920 520 950 515 985 520M920 520V565M950 515V562M1020 600L1060 560 1100 610 1100 650 1050 655 1022 645M1100 610L1157 620M1050 655V700L1020 700M1100 650L1130 690M1060 700L1100 690 1120 720M1060 700V730L1035 730M1137 570L1160 600' +
  'M1020 330L1050 335 1080 320 1110 350 1130 345M1050 335V370M1080 370L1110 375M1060 250L1055 290M1090 235L1100 280 1080 310 1060 310M1130 345L1160 330 1230 320 1290 325 1340 340 1400 345 1440 335 1500 345 1570 330 1600 345 1640 340 1662 365M1340 340L1370 375 1430 385 1500 370 1530 350M1200 370L1260 375 1310 395 1340 420 1390 460 1422 470M1160 400L1200 420 1240 465M1240 390L1250 440 1300 475M1300 395L1290 440 1320 475M1422 470L1440 450 1470 460 1500 500M1140 420L1180 425 1240 465M1160 460L1220 490 1250 480M1580 355L1600 395M1470 460L1480 510';

const C = { a: '#4fa88c', f: '#c9694d', n: '#7e8fbe', s: '#c56ea6', z: '#a6d854', e: '#d9b21e' };

const arcs: [string, string, number?][] = [
  [C.n, 'C800 230 500 215 322 396'], [C.n, 'C800 245 520 225 348 413'],
  [C.n, 'C820 290 640 275 498 371'], [C.n, 'C820 298 640 285 508 386'], [C.n, 'C820 302 640 292 513 402'],
  [C.n, 'C820 305 650 295 520 394'], [C.n, 'C820 308 660 310 548 408'], [C.n, 'C820 308 670 320 555 404'],
  [C.n, 'C820 294 620 262 460 437'], [C.n, 'C820 298 610 255 432 487'], [C.n, 'C820 302 620 270 445 487'],
  [C.n, 'C800 325 640 345 503 520'], [C.s, 'C800 325 660 370 518 540'], [C.s, 'C800 340 700 420 606 540'],
  [C.n, 'C780 340 690 410 540 604'], [C.s, 'C790 345 690 410 560 583'], [C.n, 'C784 343 690 412 552 584'], [C.s, 'C790 345 690 470 555 655'],
  [C.a, 'C840 370 780 600 653 769', 1.1], [C.s, 'C860 390 830 520 735 705'],
  [C.e, 'L905 390'], [C.e, 'L930 390'], [C.e, 'L942 410'], [C.e, 'L938 310'], [C.e, 'L925 375'],
  [C.f, 'C950 230 965 155 1042 153'], [C.f, 'C962 300 961 270 961 220'], [C.f, 'C960 400 958 500 957 593'],
  [C.f, 'C965 400 962 450 968 518'], [C.f, 'C975 400 980 480 987 563'], [C.f, 'C965 420 970 480 962 520'],
  [C.a, 'C1122 215 1472 175 1642 413'], [C.a, 'C1072 250 1352 230 1504 347'], [C.a, 'C1122 265 1392 240 1577 518'],
  [C.f, 'C1122 273 1292 280 1402 352S1552 510 1622 638S1692 720 1735 763'],
  [C.f, 'C1122 283 1292 290 1394 365S1544 510 1612 640S1680 720 1730 768'],
  [C.e, 'C1122 295 1372 310 1504 538'], [C.f, 'C1122 328 1262 410 1368 555S1470 705 1550 758'],
  [C.a, 'C1092 325 1262 400 1362 530', 1.3], [C.a, 'C1092 320 1252 385 1354 498', 1.3], [C.a, 'C1092 322 1262 395 1360 520', 1.5], [C.a, 'C1085 328 1255 398 1358 528'],
  [C.f, 'C1092 330 1252 410 1372 558', 1.2], [C.a, 'C1122 305 1312 330 1418 470'], [C.a, 'C1122 305 1352 345 1540 632', 1.3], [C.a, 'C1122 300 1382 330 1544 612'],
  [C.a, 'C1122 312 1342 350 1480 562'], [C.a, 'C1122 315 1302 340 1414 455'], [C.a, 'C1122 310 1332 335 1450 510'],
  [C.s, 'C1122 320 1312 360 1477 578', 1.5], [C.s, 'C1122 315 1322 355 1480 572'],
  [C.a, 'C1010 330 1060 350 1102 378'], [C.a, 'C1000 330 1040 345 1082 372'], [C.a, 'C1010 325 1110 345 1178 418'], [C.a, 'C1000 320 1040 300 1080 290'],
  [C.f, 'C1010 340 1060 380 1112 437'], [C.f, 'C1020 350 1100 440 1153 548'], [C.f, 'C1000 330 1050 350 1090 382'],
  [C.n, 'C1010 370 1082 490 1122 597', 1.3], [C.z, 'C1010 350 1082 450 1142 612', 1.3], [C.e, 'C1012 350 1086 450 1144 600', 1.3], [C.e, 'C1005 365 1065 520 1112 685'],
  [C.f, 'C1000 370 1050 560 1092 760'], ['#e8825f', 'C1002 370 1052 550 1097 730', 1.9], [C.a, 'C1000 370 1048 550 1086 720'], [C.f, 'C998 370 1042 550 1088 726'],
  [C.f, 'C980 400 1010 580 1044 758'], [C.a, 'C985 400 1015 560 1040 706'], [C.f, 'C990 380 1035 560 1062 670'],
];

const legend: [string, string][] = [['Asia', C.a], ['Africa', '#e8724c'], ['N. America', '#7e8fc0'], ['S. America', '#c95fa4'], ['Australia/N.Z.', '#9ccc4c'], ['Europe', '#e6c02a']];

function FollowerMap() {
  return (
    <svg width="650" height="366" viewBox="297 354 650 366" className="block bg-black" fontFamily="Liberation Sans, sans-serif">
      <defs>
        <filter id="coast" x="0" y="0" width="100%" height="100%">
          <feTurbulence type="fractalNoise" baseFrequency="0.160" numOctaves="2" seed="4" result="n" />
          <feDisplacementMap in="SourceGraphic" in2="n" scale="4.500" xChannelSelector="R" yChannelSelector="G" />
        </filter>
      </defs>
      <g filter="url(#coast)">
        <rect x="297" y="354" width="650" height="366" fill="#000" />
        <g transform="translate(296 350) scale(.33333)">
          {land.map((d, i) => <path key={i} d={d} fill="#1b1b1b" />)}
          <path d={borders} fill="none" stroke="#060606" strokeWidth="2.400" />
        </g>
      </g>
      <rect x="326" y="689.500" width="583" height="2.500" fill="#1b1b1b" />
      <g transform="translate(296 350) scale(.33333)" fill="none">
        {arcs.map(([c, d, w], i) => <path key={i} d={`M950 326${d}`} stroke={c} strokeWidth={(w ?? 1) * 2.800} opacity=".88" />)}
        <path d="M1767 153C1830 160 1848 200 1856 290Q1866 430 1870 608" stroke={C.f} strokeWidth="2.800" opacity=".88" />
        <circle cx="950" cy="326" r="7" fill="#f0d23c" />
      </g>
      <text x="564.500" y="398" fontSize="10.600" fill="#c4c4c4" textLength="115" lengthAdjust="spacingAndGlyphs">@Arsenal Follower Map</text>
      {legend.map(([t, c], i) => <text key={t} x="318.300" y={560.400 + i * 9.750} fontSize="8" fill={c} stroke={c} strokeWidth=".15">{t}</text>)}
      <text x="802" y="707.500" fontSize="9.300" fill="#b0b0b0" textLength="44">Created by</text>
      <text x="851.500" y="707.500" fontSize="9.200" fill="#fff" fontWeight="900" fontStyle="italic" fontFamily="Lato, sans-serif" textLength="71">FOOTWEETS.COM</text>
    </svg>
  );
}

/* ---------- Notifications ---------- */

const notes = [
  ['comment', 'New Comment', '4 minutes ago'],
  ['twitter', '3 New Followers', '12 minutes ago'],
  ['envelope', 'Message Sent', '27 minutes ago'],
  ['tasks', 'New Task', '43 minutes ago'],
  ['upload', 'Server Rebooted', '11:32 AM'],
  ['bolt', 'Server Crashed!', '11:13 AM'],
  ['warning', 'Server Not Responding', '10:57 AM'],
  ['cart', 'New Order Placed', '9:49 AM'],
  ['money', 'Payment Received', 'Yesterday'],
];

function Notifications() {
  return (
    <section className="w-[326px] rounded-t-[4px] border border-[#ddd] tracking-[0.08px]">
      <header className="flex h-[41px] items-center rounded-t-[3px] border-b border-[#ddd] bg-[#f5f5f5] px-[15px]">
        <Fw name="bell" />
        <span className="ml-1">Notifications Panel</span>
      </header>
      <div className="p-[15px]">
        <ul className="rounded-t-[4px] border border-[#ddd] text-[#555]">
          {notes.map(([icon, text, time]) => (
            <li key={text} className="flex h-[41px] items-center border-b border-[#ddd] px-[15px]">
              <Fw name={icon} />
              <span className="ml-1">{text}</span>
              <em className="mb-[5px] ml-auto text-[12px] text-[#777]">{time}</em>
            </li>
          ))}
        </ul>
      </div>
    </section>
  );
}

function Main() {
  return (
    <main className="w-[1098px] shrink-0 pl-[30px] pr-[30px]">
      <h1 className="-mt-[19px] mb-5 h-[50px] border-b border-[#eee] pt-px text-[36px] leading-[40px]">Dashboard</h1>
      <Cards />
      <div className="mt-5 flex items-start gap-[30px]">
        <section className="w-[682px] shrink-0 rounded-t-[4px] border border-[#ddd]">
          <header className="flex h-[41px] items-center rounded-t-[3px] border-b border-[#ddd] bg-[#f5f5f5] px-[15px]">
            <Fw name="chart" />
            <span className="ml-1 tracking-[0.09px]">Area Chart Example</span>
            <span className="ml-auto mt-[2px] flex h-[22px] w-[63px] items-center justify-center gap-1 rounded-[3px] border border-[#ccc] bg-white text-[12px]">
              Actions
              <span className="mt-px h-0 w-0 border-x-4 border-t-4 border-x-transparent border-t-[#333]" />
            </span>
          </header>
          <div className="p-[15px]"><FollowerMap /></div>
        </section>
        <Notifications />
      </div>
    </main>
  );
}

/* ---------- Taskbar ---------- */

const taskIcons: [React.ReactNode, string][] = [
  [<svg width="20" height="16" viewBox="0 0 20 16" fill="none" stroke="#fff" strokeWidth="1.200"><path d="M4.500 1.500h11v13h-11zM2.500 3.500h-2v9h2M17.500 3.500h2v9h-2" /></svg>, ''],
  [<svg width="22" height="22" viewBox="0 0 22 22" fill="#0078d7"><path d="M1 9.500C2 3.500 6 .5 11.200.5c6 0 9.300 4 9.300 9.500v2.500H7.500c.200 3.500 3 5.200 6.200 5.200 2.300 0 4.200-.600 5.800-1.600v4.300c-1.900 1-4.200 1.500-6.700 1.500-6 0-9.300-3.500-9.300-8.400 0-3.600 2-6.500 5-8C5 6.300 2.500 7.300 1 9.500zM7.700 8.700h7.600c0-2.500-1.200-4.200-3.600-4.200-2.300 0-3.700 1.600-4 4.200z" /></svg>, ''],
  [<svg width="22" height="22" viewBox="0 0 22 22"><path d="M0 2h8l2 2h12v15H0z" fill="#f0c14b" /><path d="M0 6h22v13H0z" fill="#fbe08f" /><path d="M4 20v-7q0-2 2-2h10q2 0 2 2v7h-4v-5H8v5z" fill="#29a9e8" /></svg>, 'bg-[#ffb0b0]'],
  [<svg width="22" height="24" viewBox="0 0 22 24"><path d="M1 8l19-2v16L1 23z" fill="#fff" /><path d="M5 7q1-5 5-5t4 4M8 7q2-6 5-6 3 0 4 5" stroke="#fff" fill="none" strokeWidth="1.300" /><path d="M5 12l4.500-.6v4H5zM10.500 11.300l5.500-.8v4.800h-5.500zM5 16.300h4.500v4L5 20zM10.500 16.300H16v4.600l-5.500-.5z" fill="#111" /></svg>, ''],
  [<span className="flex h-[21px] w-[22px] items-center justify-center border-2 border-[#33b5e5] bg-[#0a1e30] text-[12px] font-semibold leading-none text-[#3fc3f2]">Ps</span>, ''],
  [<svg width="24" height="24" viewBox="0 0 24 24"><path d="M0 0h24v24H0z" fill="#5a50a0" /><path d="M11 2h2v3h4v4h2l-1 7h3l-2 4H5l-2-4h3V10h2V5h3z" fill="#e3e0f5" /><path d="M8 9h8M7 13h11M12 4v13M4 17.500h16" stroke="#5a50a0" /></svg>, ''],
  [<svg width="22" height="24" viewBox="0 0 22 24"><path d="M3 17h16l2 6H1z" fill="#f08a1c" /><path d="M9.500 1h3l5 18q-6.500 3-13 0z" fill="#f5861f" /><path d="M8.300 6h5.400l1.200 4.200q-4 1.500-7.800 0zM6.200 13.500h9.600l1 4q-6 2.200-11.600 0z" fill="#eee" /></svg>, ''],
  [<svg width="22" height="22" viewBox="0 0 22 22"><circle cx="11" cy="11" r="11" fill="#ffce44" /><path d="M11 11L1.500 5.500A11 11 0 0 1 20.500 5.500H11z" fill="#de4a3a" /><path d="M1.500 5.500A11 11 0 0 0 9.500 21.900L14.500 13.500 11 11 6.500 14z" fill="#1da462" /><path d="M20.500 5.500A11 11 0 0 1 9.500 21.900L16 12V5.500z" fill="#ffce44" /><circle cx="11" cy="11" r="5" fill="#fff" /><circle cx="11" cy="11" r="4" fill="#4a84ec" /></svg>, 'bg-[#ffb0b0]'],
  [<Xampp size={24} />, 'bg-[#ffb0b0]'],
  [<span className="h-[19px] w-[23px] border border-[#aaa] border-t-[3px] border-t-[#ccc] bg-black pl-px font-['Liberation_Mono'] text-[7px] font-bold leading-[8px] tracking-[-0.5px] text-white">C:\_</span>, 'bg-[#ffb0b0]'],
  [<span className="flex h-6 w-6 items-center justify-center bg-[linear-gradient(110deg,#fe315d_20%,#b743e0_50%,#087cfa_70%)] [clip-path:polygon(0_15%,45%_0,100%_30%,95%_75%,60%_100%,45%_85%,10%_100%)]"><span className="flex h-[15px] w-[14px] items-start bg-black pl-[2px] pt-px font-['Liberation_Mono'] text-[8px] font-bold leading-[9px] text-white">IJ</span></span>, 'bg-[#ffb0b0]'],
  [<svg width="22" height="24" viewBox="0 0 22 24"><path d="M1 2h17v21H1z" fill="#f4f8ee" stroke="#aaa" strokeWidth=".6" /><path d="M2 16q8-2 15-5v11H2z" fill="#6cc22e" /><path d="M5 8v7M5 8.500h3v5H5M10 11h4" stroke="#333" strokeWidth="1.300" fill="none" /><path d="M3 3.500h13" stroke="#bbb" /><path d="M20 1l2 2-7 14-2 1 .4-2.500z" fill="#f2a52a" stroke="#a66a10" strokeWidth=".5" /></svg>, 'bg-[#ffb0b0]'],
];

function Taskbar() {
  return (
    <div className="flex h-10 shrink-0 bg-black font-['Open_Sans'] text-white">
      <div className="flex w-12 items-center justify-center">
        <svg width="16" height="16" viewBox="0 0 16 16" fill="#fff"><path d="M0 2.300L6.500 1.300v6.200H0zM7.300 1.200L16 0v7.500H7.300zM0 8.400h6.500v6.300L0 13.700zM7.300 8.400H16V16l-8.700-1.200z" /></svg>
      </div>
      <div className="w-[344px] bg-[#333] pl-3 text-[15px] leading-[40px] tracking-[-0.42px] text-[#9a9a9a]">Search the web and Windows</div>
      <div className="flex gap-px bg-[linear-gradient(90deg,#050505,#1a0506_15%,#120203_60%,#080102)] pl-px">
        {taskIcons.map(([icon, bar], i) => (
          <div key={i} className={`flex w-12 flex-col items-center ${i === 7 ? 'bg-[#3a3536]' : ''}`}>
            <div className="flex h-[38px] items-center pt-[2px]">{icon}</div>
            <div className={`h-[2px] ${i === 7 ? 'w-full' : 'w-10'} ${bar}`} />
          </div>
        ))}
      </div>
      <svg className="ml-auto" width="120" height="40" viewBox="1162 728 120 40" fill="none" stroke="#fff" strokeWidth="1.200">
        <path d="M1168.500 751l5.500-5.500 5.500 5.500" />
        <path d="M1190 745.500h2.500l4-3.500v12l-4-3.500h-2.500zM1199 745q1.800 3 0 6M1201.500 743.500q3 4.500 0 9M1204 742q4.200 6 0 12" />
        <path d="M1219 744.500h10v8h-10M1229.500 747v3M1214.500 742v2.500M1217.500 742v2.500M1213.500 744.500h5v2q0 2-2.500 2.500v4.500h3" />
        <path d="M1241 754.500q1-10 11-12M1243.500 754.500q1-7.500 8.500-9M1246.500 754.500q.5-5 5.500-6M1249.500 754.500q0-2.500 2.500-3" />
        <path d="M1262.500 740.500h15v11h-5l-2.500 3-2.500-3h-5zM1265 744h10M1265 747h10M1265 749.500h6" />
      </svg>
      <div className="flex w-[79px] flex-col items-center text-[12px] leading-[17px] tracking-[-0.3px]">
        <span className="pt-[2px]">13:02</span>
        <span>19-04-2016</span>
      </div>
      <div className="mr-1 w-px bg-[#555]" />
    </div>
  );
}

export default function App() {
  return (
    <div className="flex h-[768px] w-[1366px] flex-col overflow-hidden bg-white font-['Liberation_Sans'] text-[14px] leading-5 text-[#333]">
      <div className="shrink-0 font-['Open_Sans']">
        <TabStrip />
        <div className="flex h-[60px] flex-col border-b border-[#a3a3a3] bg-[linear-gradient(#fcfcfc,#f0f0f0_45%,#dcdcdc)]">
          <Toolbar />
          <BookmarksBar />
        </div>
      </div>
      <div className="flex h-[626px] shrink-0 overflow-hidden">
        <Sidebar />
        <Main />
        <div className="flex w-[17px] flex-col items-center bg-[#f1f1f1]">
          <div className="mt-[7px] h-0 w-0 border-x-4 border-b-4 border-x-transparent border-b-[#505050]" />
          <div className="mt-10 h-[51px] w-[13px] bg-[#c1c1c1]" />
          <div className="mb-[7px] mt-auto h-0 w-0 border-x-4 border-t-4 border-x-transparent border-t-[#505050]" />
        </div>
      </div>
      <div className="flex h-[17px] shrink-0 items-center bg-[#f1f1f1]">
        <div className="ml-[6px] h-0 w-0 border-y-4 border-r-4 border-y-transparent border-r-[#a3a3a3]" />
        <div className="ml-[7px] h-[13px] w-[981px] bg-[#c1c1c1]" />
        <div className="ml-auto mr-[7px] h-0 w-0 border-y-4 border-l-4 border-y-transparent border-l-[#505050]" />
        <div className="h-full w-[17px] bg-[#dcdcdc]" />
      </div>
      <Taskbar />
    </div>
  );
}
